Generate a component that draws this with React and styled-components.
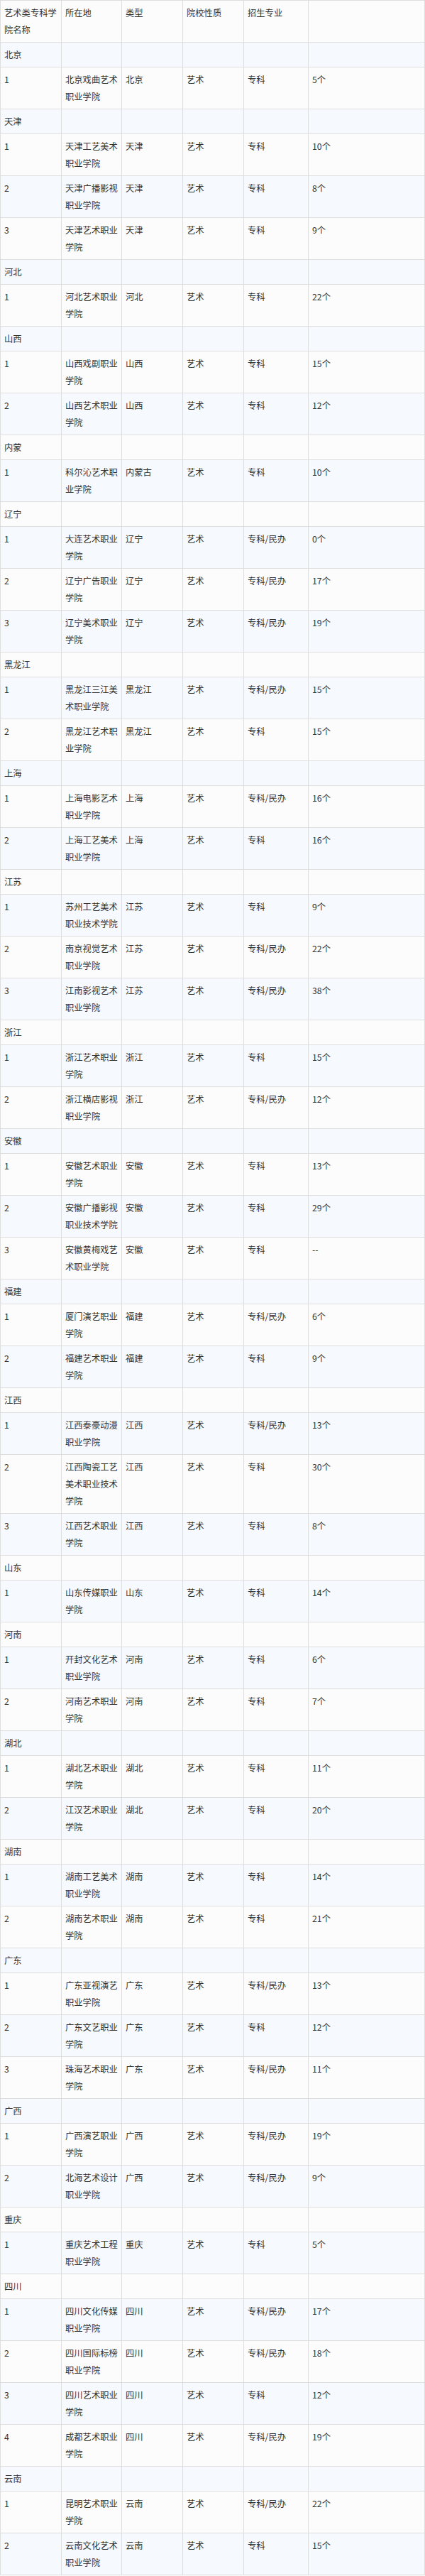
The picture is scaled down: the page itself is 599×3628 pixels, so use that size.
import React from "react";
import styled, { createGlobalStyle } from "styled-components";

const GlobalStyle = createGlobalStyle`
  html, body {
    margin: 0;
    padding: 0;
    background: #fcfcfc;
  }
  body {
    font-family: "Noto Sans CJK SC", "Noto Sans", sans-serif;
  }
`;

const COLUMNS = [86, 85, 86, 86, 91, null];

const HEADERS = ["艺术类专科学院名称", "所在地", "类型", "院校性质", "招生专业", ""];

const GROUPS = [
  { name: "北京", items: [["北京戏曲艺术职业学院", "北京", "专科", "5个"]] },
  {
    name: "天津",
    items: [
      ["天津工艺美术职业学院", "天津", "专科", "10个"],
      ["天津广播影视职业学院", "天津", "专科", "8个"],
      ["天津艺术职业学院", "天津", "专科", "9个"],
    ],
  },
  { name: "河北", items: [["河北艺术职业学院", "河北", "专科", "22个"]] },
  {
    name: "山西",
    items: [
      ["山西戏剧职业学院", "山西", "专科", "15个"],
      ["山西艺术职业学院", "山西", "专科", "12个"],
    ],
  },
  { name: "内蒙", items: [["科尔沁艺术职业学院", "内蒙古", "专科", "10个"]] },
  {
    name: "辽宁",
    items: [
      ["大连艺术职业学院", "辽宁", "专科/民办", "0个"],
      ["辽宁广告职业学院", "辽宁", "专科/民办", "17个"],
      ["辽宁美术职业学院", "辽宁", "专科/民办", "19个"],
    ],
  },
  {
    name: "黑龙江",
    items: [
      ["黑龙江三江美术职业学院", "黑龙江", "专科/民办", "15个"],
      ["黑龙江艺术职业学院", "黑龙江", "专科", "15个"],
    ],
  },
  {
    name: "上海",
    items: [
      ["上海电影艺术职业学院", "上海", "专科/民办", "16个"],
      ["上海工艺美术职业学院", "上海", "专科", "16个"],
    ],
  },
  {
    name: "江苏",
    items: [
      ["苏州工艺美术职业技术学院", "江苏", "专科", "9个"],
      ["南京视觉艺术职业学院", "江苏", "专科/民办", "22个"],
      ["江南影视艺术职业学院", "江苏", "专科/民办", "38个"],
    ],
  },
  {
    name: "浙江",
    items: [
      ["浙江艺术职业学院", "浙江", "专科", "15个"],
      ["浙江横店影视职业学院", "浙江", "专科/民办", "12个"],
    ],
  },
  {
    name: "安徽",
    items: [
      ["安徽艺术职业学院", "安徽", "专科", "13个"],
      ["安徽广播影视职业技术学院", "安徽", "专科", "29个"],
      ["安徽黄梅戏艺术职业学院", "安徽", "专科", "--"],
    ],
  },
  {
    name: "福建",
    items: [
      ["厦门演艺职业学院", "福建", "专科/民办", "6个"],
      ["福建艺术职业学院", "福建", "专科", "9个"],
    ],
  },
  {
    name: "江西",
    items: [
      ["江西泰豪动漫职业学院", "江西", "专科/民办", "13个"],
      ["江西陶瓷工艺美术职业技术学院", "江西", "专科", "30个"],
      ["江西艺术职业学院", "江西", "专科", "8个"],
    ],
  },
  { name: "山东", items: [["山东传媒职业学院", "山东", "专科", "14个"]] },
  {
    name: "河南",
    items: [
      ["开封文化艺术职业学院", "河南", "专科", "6个"],
      ["河南艺术职业学院", "河南", "专科", "7个"],
    ],
  },
  {
    name: "湖北",
    items: [
      ["湖北艺术职业学院", "湖北", "专科", "11个"],
      ["江汉艺术职业学院", "湖北", "专科", "20个"],
    ],
  },
  {
    name: "湖南",
    items: [
      ["湖南工艺美术职业学院", "湖南", "专科", "14个"],
      ["湖南艺术职业学院", "湖南", "专科", "21个"],
    ],
  },
  {
    name: "广东",
    items: [
      ["广东亚视演艺职业学院", "广东", "专科/民办", "13个"],
      ["广东文艺职业学院", "广东", "专科", "12个"],
      ["珠海艺术职业学院", "广东", "专科/民办", "11个"],
    ],
  },
  {
    name: "广西",
    items: [
      ["广西演艺职业学院", "广西", "专科/民办", "19个"],
      ["北海艺术设计职业学院", "广西", "专科/民办", "9个"],
    ],
  },
  { name: "重庆", items: [["重庆艺术工程职业学院", "重庆", "专科", "5个"]] },
  {
    name: "四川",
    items: [
      ["四川文化传媒职业学院", "四川", "专科/民办", "17个"],
      ["四川国际标榜职业学院", "四川", "专科/民办", "18个"],
      ["四川艺术职业学院", "四川", "专科", "12个"],
      ["成都艺术职业学院", "四川", "专科/民办", "19个"],
    ],
  },
  {
    name: "云南",
    items: [
      ["昆明艺术职业学院", "云南", "专科/民办", "22个"],
      ["云南文化艺术职业学院", "云南", "专科", "15个"],
    ],
  },
];

const Table = styled.table`
  width: 599px;
  border-collapse: collapse;
  table-layout: fixed;
  color: #333;
  font-size: 12.3px;
  line-height: 24px;
`;

const Col = styled.col`
  width: ${(p) => (p.$w ? `${p.$w}px` : "auto")};
`;

const Row = styled.tr`
  background: #fcfcfc;

  tbody &:nth-child(odd) {
    background: #f6f9fe;
  }
`;

const Cell = styled.td`
  border: 1px solid #dedede;
  padding: 5px 4px 5px 5px;
  vertical-align: top;
  text-align: left;
  font-weight: 400;
  word-break: break-all;
`;

const HeadCell = styled(Cell).attrs({ as: "th" })``;

const App = () => {
  const rows = [];
  GROUPS.forEach((group) => {
    rows.push(
      <Row key={group.name}>
        <Cell>{group.name}</Cell>
        <Cell />
        <Cell />
        <Cell />
        <Cell />
        <Cell />
      </Row>
    );
    group.items.forEach(([name, loc, level, count], i) => {
      rows.push(
        <Row key={name}>
          <Cell>{i + 1}</Cell>
          <Cell>{name}</Cell>
          <Cell>{loc}</Cell>
          <Cell>艺术</Cell>
          <Cell>{level}</Cell>
          <Cell>{count}</Cell>
        </Row>
      );
    });
  });

  return (
    <>
      <GlobalStyle />
      <Table>
        <colgroup>
          {COLUMNS.map((w, i) => (
            <Col key={i} $w={w} />
          ))}
        </colgroup>
        <thead>
          <Row>
            {HEADERS.map((h, i) => (
              <HeadCell key={i}>{h}</HeadCell>
            ))}
          </Row>
        </thead>
        <tbody>{rows}</tbody>
      </Table>
    </>
  );
};

export default App;
